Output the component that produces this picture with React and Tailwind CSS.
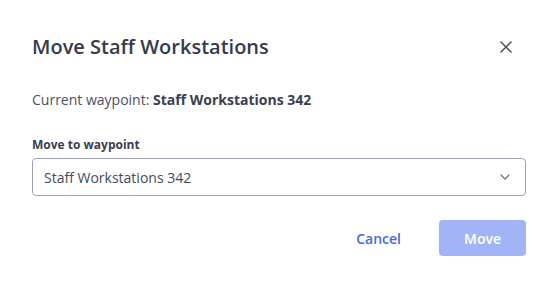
export default function App() {
  return (
    <div className="w-[558px] h-[286px] bg-white text-[#3b4050]" style={{ fontFamily: '"Open Sans", "Noto Sans", sans-serif' }}>
      <div className="px-8 pt-[32px]">
        <div className="flex items-center justify-between h-[30px]">
          <h2 className="text-[20px] font-semibold text-[#363b4c] leading-[30px]">Move Staff Workstations</h2>
          <button className="w-[24px] h-[24px] flex items-center justify-center mr-[8px]">
            <svg width="14" height="14" viewBox="0 0 14 14" fill="none" stroke="#4a4f60" strokeWidth="1.5" strokeLinecap="round">
              <path d="M2 2 L12 12 M12 2 L2 12" />
            </svg>
          </button>
        </div>
        <p className="mt-[28px] text-[14px] leading-[20px] text-[#4b5060]">
          Current waypoint: <span className="font-bold text-[#3b4050]">Staff Workstations 342</span>
        </p>
        <label className="block mt-[27px] text-[12px] font-bold leading-[16px] text-[#3b4050]">Move to waypoint</label>
        <div className="mt-[5px] h-[38px] border border-[#9aa2b4] rounded-[4px] flex items-center justify-between pl-[11px] pr-[14px]">
          <span className="text-[14px] text-[#444a5a]">Staff Workstations 342</span>
          <svg width="12" height="8" viewBox="0 0 12 8" fill="none" stroke="#6b7080" strokeWidth="1.2" strokeLinecap="round" strokeLinejoin="round">
            <path d="M2 2 L6 6 L10 2" />
          </svg>
        </div>
        <div className="mt-[24px] flex justify-end items-center gap-[38px]">
          <button className="text-[14px] font-semibold text-[#4567e6]">Cancel</button>
          <button className="w-[87px] h-[36px] rounded-[4px] bg-[#a2b4f5] text-white text-[14px] font-semibold">Move</button>
        </div>
      </div>
    </div>
  );
}
